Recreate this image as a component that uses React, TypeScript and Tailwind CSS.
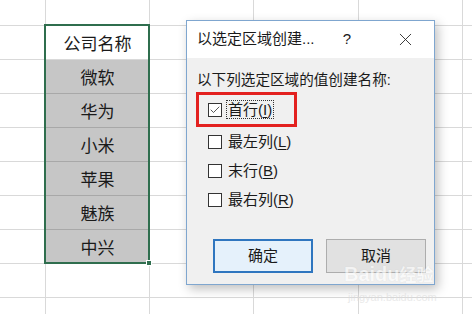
import { Check, X } from "lucide-react";

const colWidths = [46, 104, 104, 105, 104];
const names = ["公司名称", "微软", "华为", "小米", "苹果", "魅族", "中兴"];
const rowHeights = [26, 34, 34, 34, 34, 34, 34, 34, 34, 34];

const font = "font-['Liberation_Sans','Noto_Sans_CJK_SC',sans-serif]";

function Cell({ col, row }: { col: number; row: number }) {
  const inSel = col === 1 && row >= 1 && row <= 7;
  const gray = inSel && row > 1;
  return (
    <div
      className={`flex items-center justify-center border-b border-r box-border text-[17px] leading-none text-[#1a1a1a] ${
        gray ? "bg-[#c6c6c6] border-[#a8a8a8]" : "bg-white border-[#d9d9d9]"
      }`}
      style={{ height: rowHeights[row] }}
    >
      {inSel ? names[row - 1] : null}
    </div>
  );
}

function Sheet() {
  return (
    <div className="flex">
      {colWidths.map((w, c) => (
        <div key={c} className="flex flex-col shrink-0" style={{ width: w }}>
          {rowHeights.map((_, r) => (
            <Cell key={r} col={c} row={r} />
          ))}
        </div>
      ))}
      <div className="flex flex-col flex-1">
        {rowHeights.map((h, r) => (
          <div key={r} className="border-b border-[#d9d9d9] bg-white" style={{ height: h }} />
        ))}
      </div>
    </div>
  );
}

function Box({ checked }: { checked?: boolean }) {
  return (
    <span className="w-[14px] h-[14px] border border-[#333] bg-white flex items-center justify-center shrink-0">
      {checked && <Check size={12} strokeWidth={1.5} className="text-[#222]" />}
    </span>
  );
}

function Option({ label, mnem, checked, focus }: { label: string; mnem: string; checked?: boolean; focus?: boolean }) {
  return (
    <div className="flex items-center gap-[4px]">
      <Box checked={checked} />
      <span
        className={`text-[15px] leading-[15px] text-[#1a1a1a] px-px py-[1px] ${
          focus ? "border border-dotted border-[#333]" : "border border-transparent"
        }`}
      >
        {label}(<span className="underline underline-offset-2">{mnem}</span>)
      </span>
    </div>
  );
}

function Dialog() {
  return (
    <div className={`absolute left-[186px] top-[20px] w-[249px] h-[265px] border border-[#7fa6cf] bg-[#f0f0f0] shadow-[3px_4px_10px_rgba(0,0,0,0.25)] flex flex-col ${font}`}>
      <div className="h-[37px] bg-white flex items-center pl-[10px] text-[15px] text-[#1a1a1a] shrink-0">
        <span className="w-[142px]">以选定区域创建...</span>
        <span className="w-[16px] text-center">?</span>
        <span className="ml-[40px] flex">
          <X size={21} strokeWidth={1} className="text-[#222]" />
        </span>
      </div>
      <div className="flex flex-col pl-[9px] pr-[8px]">
        <div className="mt-[12px] pl-[1px] text-[14.6px] leading-[20px] text-[#1a1a1a] whitespace-nowrap">
          以下列选定区域的值创建名称:
        </div>
        <div className="mt-[2px] w-[101px] h-[35px] border-[3px] border-[#e3211f] flex items-center pl-[9px]">
          <Option label="首行" mnem="I" checked focus />
        </div>
        <div className="h-[29px] flex items-center pl-[12px]">
          <Option label="最左列" mnem="L" />
        </div>
        <div className="h-[29px] flex items-center pl-[12px]">
          <Option label="末行" mnem="B" />
        </div>
        <div className="h-[29px] flex items-center pl-[12px]">
          <Option label="最右列" mnem="R" />
        </div>
        <div className="mt-[25px] flex justify-end gap-[13px]">
          <button className="w-[100px] h-[34px] border-2 border-[#2f76bf] bg-[#e5f1fb] text-[15px] text-[#1a1a1a]">
            确定
          </button>
          <button className="w-[100px] h-[34px] border border-[#adadad] bg-[#e1e1e1] text-[15px] text-[#1a1a1a]">
            取消
          </button>
        </div>
      </div>
    </div>
  );
}

export default function App() {
  return (
    <div className="relative w-[472px] h-[314px] overflow-hidden bg-white font-['Noto_Sans_CJK_SC',sans-serif]">
      <Sheet />
      {/* selection outline + fill handle */}
      <div className="absolute left-[44px] top-[24px] w-[106px] h-[240px] border-2 border-[#2f6e4e] pointer-events-none" />
      <div className="absolute left-[146px] top-[260px] w-[6px] h-[6px] bg-[#2f6e4e] border border-white" />
      <Dialog />
      {/* watermark */}
      <div className="absolute left-[344px] top-[259px] text-[20px] font-bold text-white opacity-60 [text-shadow:0_0_1px_rgba(0,0,0,0.15)] font-['Liberation_Sans',sans-serif]">
        Baidu<span className="font-['Noto_Sans_CJK_SC',sans-serif] text-[17px]">经验</span>
      </div>
      <div className="absolute left-[348px] top-[289px] text-[11px] text-[#dcdcdc] opacity-60 font-['Liberation_Sans',sans-serif]">
        jingyan.baidu.com
      </div>
    </div>
  );
}
